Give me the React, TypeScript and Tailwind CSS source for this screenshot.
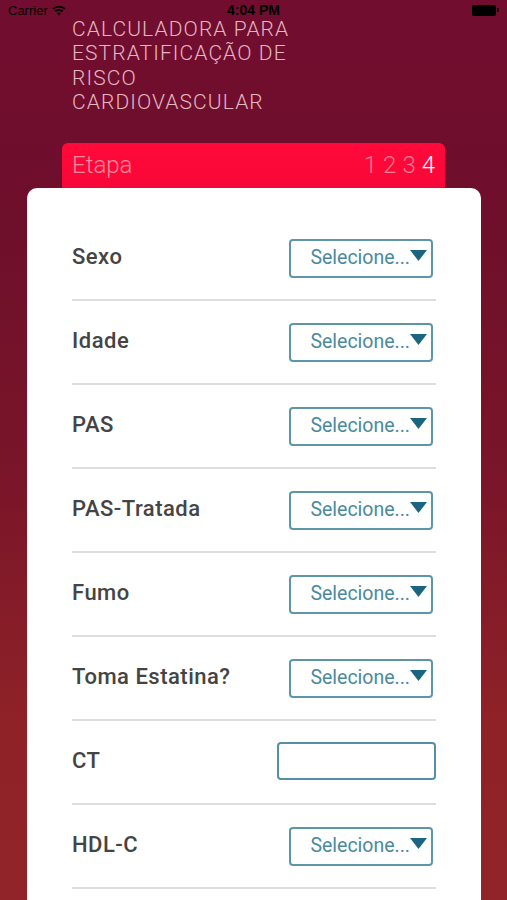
import React from "react";

const rows: { label: string; kind: "select" | "input" }[] = [
  { label: "Sexo", kind: "select" },
  { label: "Idade", kind: "select" },
  { label: "PAS", kind: "select" },
  { label: "PAS-Tratada", kind: "select" },
  { label: "Fumo", kind: "select" },
  { label: "Toma Estatina?", kind: "select" },
  { label: "CT", kind: "input" },
  { label: "HDL-C", kind: "select" },
];

function Select() {
  return (
    <div className="w-[144px] h-[39px] border-2 border-[#5f95a8] rounded-[4px] flex items-center justify-end pr-[4px] bg-white">
      <span className="text-[19.5px] text-[#4a8a9e] leading-none">Selecione...</span>
      <svg width="17" height="11" viewBox="0 0 17 11" className="mt-[-5px]">
        <polygon points="0,0 17,0 8.5,11" fill="#1c6582" />
      </svg>
    </div>
  );
}

export default function App() {
  return (
    <div
      className="w-[507px] h-[900px] overflow-hidden relative bg-[linear-gradient(180deg,#720d2f_0%,#6e0f2b_25%,#7b1629_55%,#8e2227_80%,#902428_100%)]"
      style={{ fontFamily: "Roboto, 'Liberation Sans', sans-serif" }}
    >
      {/* status bar */}
      <div className="h-[20px] flex items-center justify-between px-[8px] relative text-black">
        <div className="flex items-center gap-[4px]">
          <span className="text-[13px] leading-none" style={{ fontFamily: "'Liberation Sans', sans-serif" }}>Carrier</span>
          <svg width="14" height="11" viewBox="0 0 14 11">
            <path d="M1 4 A9 9 0 0 1 13 4" stroke="#000" strokeWidth="1.8" fill="none" />
            <path d="M3.3 6.3 A6 6 0 0 1 10.7 6.3" stroke="#000" strokeWidth="1.8" fill="none" />
            <path d="M7 10.5 L4.9 8.3 A3 3 0 0 1 9.1 8.3 Z" fill="#000" />
          </svg>
        </div>
        <span className="absolute left-1/2 -translate-x-1/2 text-[14px] font-bold leading-none" style={{ fontFamily: "'Liberation Sans', sans-serif" }}>4:04 PM</span>
        <div className="flex items-center gap-[1px]">
          <div className="w-[24px] h-[11px] bg-black rounded-[2px]" />
          <div className="w-[2px] h-[4px] bg-black rounded-r-[1px]" />
        </div>
      </div>

      {/* title */}
      <div className="pl-[72px] mt-[-3px] text-[21px] leading-[24.3px] font-light text-[#e6b6c3] tracking-[1.1px]">
        CALCULADORA PARA<br />ESTRATIFICAÇÃO DE<br />RISCO<br />CARDIOVASCULAR
      </div>

      {/* etapa bar */}
      <div className="mt-[29px] ml-[62px] w-[383px] h-[52px] rounded-t-[6px] bg-[linear-gradient(180deg,#ff0a3a_0%,#fb0838_60%,#f10838_100%)] flex items-start justify-between px-[10px] pt-[7px]">
        <span className="text-[24px] font-light text-[#ff8ca2] leading-[30px]">Etapa</span>
        <div className="flex gap-[6px] text-[24px] font-light leading-[30px]">
          <span className="text-[#ff7e97]">1</span>
          <span className="text-[#ff7e97]">2</span>
          <span className="text-[#ff7e97]">3</span>
          <span className="text-white">4</span>
        </div>
      </div>

      {/* card */}
      <div className="absolute left-[27px] top-[188px] w-[454px] h-[760px] bg-white rounded-[10px] px-[45px] pt-[29px]">
        {rows.map((r) => (
          <div key={r.label}>
            <div className="h-[82px] flex items-center justify-between">
              <span className="text-[22px] font-medium text-[#444444] tracking-[0.5px] mt-[-4px]">{r.label}</span>
              {r.kind === "select" ? (
                <div className="mr-[3px]">
                  <Select />
                </div>
              ) : (
                <div className="w-[159px] h-[38px] border-2 border-[#548fa3] rounded-[4px] mt-[-2px]" />
              )}
            </div>
            <div className="h-[2px] bg-[#dedede]" />
          </div>
        ))}
      </div>
    </div>
  );
}
